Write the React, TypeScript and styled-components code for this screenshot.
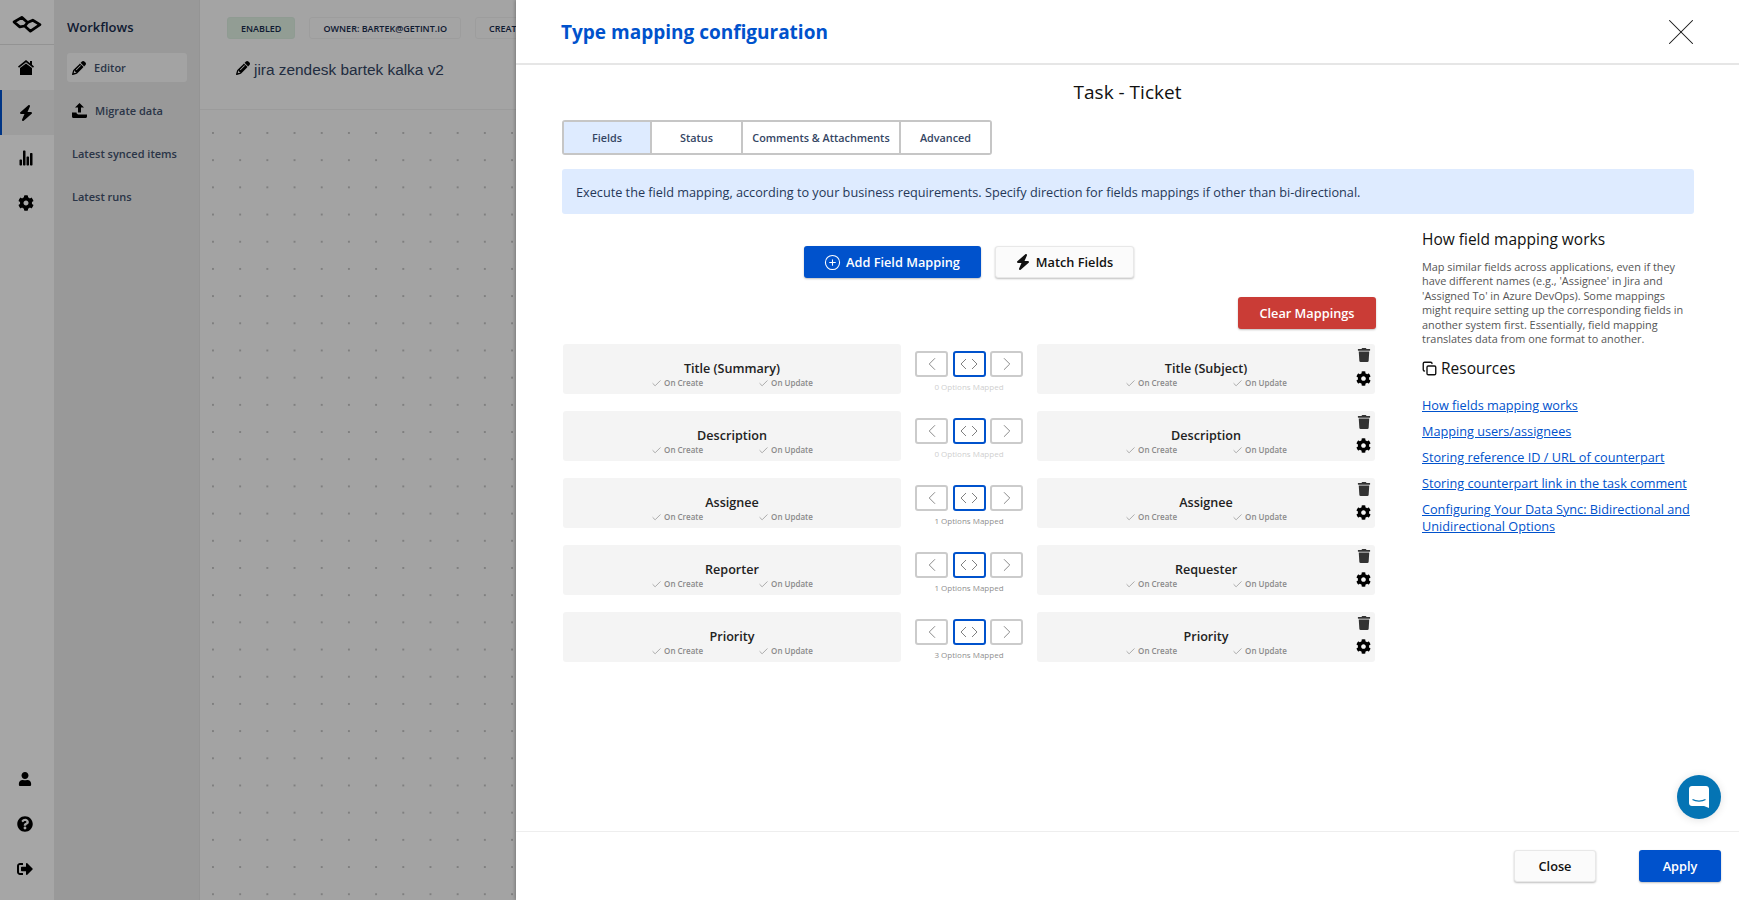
import styled, { createGlobalStyle } from "styled-components";
import { FaCog, FaTrash, FaUser, FaQuestionCircle, FaSignOutAlt } from "react-icons/fa";
import { FaBolt, FaPencil } from "react-icons/fa6";
import { IoStatsChart } from "react-icons/io5";
import { Check, ChevronLeft, ChevronRight, CirclePlus, Copy, X } from "lucide-react";

const GlobalStyle = createGlobalStyle`
  * { box-sizing: border-box; }
  html, body { margin: 0; padding: 0; height: 100%; overflow: hidden; }
  body { font-family: "Open Sans", "Noto Sans", sans-serif; background: #fff; color: #172b4d; }
`;

const Page = styled.div`
  position: relative;
  display: flex;
  width: 100%;
  height: 100vh;
  overflow: hidden;
`;

/* ---- background app, dimmed by the overlay ---- */
const Rail = styled.nav`
  width: 54px;
  flex: none;
  display: flex;
  flex-direction: column;
  background: #fff;
`;

const LogoCell = styled.div`
  height: 45px;
  display: flex;
  align-items: center;
  justify-content: center;
  padding: 3px 0 0 0;
  border-bottom: 1px solid #e2e2e2;
`;

const RailItem = styled.div<{ $active?: boolean }>`
  height: 45px;
  display: flex;
  align-items: center;
  justify-content: center;
  font-size: 16px;
  color: #000;
  background: ${({ $active }) => ($active ? "#f1f1f1" : "transparent")};
  border-left: 2px solid ${({ $active }) => ($active ? "#0052cc" : "transparent")};
  padding-right: 4px;
`;

const RailBottom = styled.div`
  margin-top: auto;
  display: flex;
  flex-direction: column;
  padding: 0 3px 9px 0;
`;

const SubNav = styled.div`
  width: 146px;
  flex: none;
  background: #ebebeb;
  padding: 16px 12px 0 13px;
  border-right: 1px solid #e4e4e4;
`;

const SubTitle = styled.div`
  font-size: 13px;
  font-weight: 600;
  line-height: 22px;
  color: #172b4d;
  margin-bottom: 15px;
`;

const SubItem = styled.div<{ $active?: boolean }>`
  height: 29px;
  margin-bottom: 14px;
  display: flex;
  align-items: center;
  gap: 8px;
  padding-left: 5px;
  border-radius: 3px;
  font-size: 11px;
  font-weight: 600;
  color: #42526e;
  background: ${({ $active }) => ($active ? "#fafafa" : "transparent")};

  svg { color: #000; flex: none; }
`;

const Main = styled.main`
  flex: 1;
  display: flex;
  flex-direction: column;
  background: #fbfbfb;
`;

const TopBar = styled.div`
  height: 110px;
  flex: none;
  padding: 17px 0 0 27px;
  border-bottom: 1px solid #eee;
  background: #fcfcfc;
`;

const Badges = styled.div`
  display: flex;
  gap: 14px;
`;

const Badge = styled.span<{ $green?: boolean }>`
  height: 22px;
  padding: 0 13px;
  display: flex;
  align-items: center;
  border-radius: 3px;
  font-size: 9px;
  font-weight: 600;
  white-space: nowrap;
  color: #172b4d;
  border: 1px solid ${({ $green }) => ($green ? "#dcefe1" : "#f2f2f2")};
  background: ${({ $green }) => ($green ? "#e0f1e4" : "#fcfcfc")};
`;

const FlowName = styled.div`
  margin: 21px 0 0 9px;
  display: flex;
  align-items: center;
  gap: 4px;
  font-family: "Liberation Sans", Arial, sans-serif;
  font-size: 15.4px;
  line-height: 20px;
  color: #344563;

  svg { color: #000; margin-top: -4px; }
`;

const Canvas = styled.div`
  flex: 1;
  background-image: radial-gradient(circle at 1px 1px, #c4c4c4 1px, transparent 1.2px);
  background-size: 27.2px 27.2px;
  background-position: 12px 22px;
`;

const Overlay = styled.div`
  position: absolute;
  inset: 0;
  background: rgba(0, 0, 0, 0.35);
`;

/* ---- modal ---- */
const Modal = styled.section`
  position: absolute;
  top: 0;
  right: 0;
  bottom: 0;
  width: 1223px;
  display: flex;
  flex-direction: column;
  background: #fff;
  box-shadow: -1px 0 3px rgba(0, 0, 0, 0.25);
`;

const ModalHeader = styled.header`
  height: 65px;
  flex: none;
  display: flex;
  align-items: center;
  justify-content: space-between;
  padding: 0 45px;
  border-bottom: 2px solid #e6e6e6;
`;

const ModalTitle = styled.h1`
  margin: 0;
  font-size: 19px;
  font-weight: 700;
  color: #0052cc;
`;

const CloseIcon = styled(X)`
  margin-right: -10px;
  color: #111;
`;

const ModalBody = styled.div`
  flex: 1;
  padding: 13px 45px 0;
`;

const TypeName = styled.div`
  text-align: center;
  font-size: 19px;
  line-height: 28px;
  color: #111;
`;

const Tabs = styled.div`
  display: inline-flex;
  margin: 14px 0 0 1px;
  height: 35px;
  border: 2px solid #c6c6c6;
  border-radius: 3px;
`;

const Tab = styled.div<{ $active?: boolean; $width: number }>`
  width: ${({ $width }) => $width}px;
  display: flex;
  align-items: center;
  justify-content: center;
  font-size: 10.8px;
  font-weight: 600;
  color: #344563;
  background: ${({ $active }) => ($active ? "#deebff" : "#fff")};
  & + & { border-left: 2px solid #c6c6c6; }
`;

const Notice = styled.div`
  height: 45px;
  margin: 14px 0 0 1px;
  padding: 0 14px;
  display: flex;
  align-items: center;
  border-radius: 3px;
  background: #deebff;
  font-size: 12.7px;
  color: #253858;
`;

const Columns = styled.div`
  display: flex;
  justify-content: space-between;
`;

const MappingColumn = styled.div`
  width: 815px;
  padding-left: 2px;
`;

const ActionRow = styled.div`
  display: flex;
  justify-content: center;
  gap: 14px;
  margin-top: 32px;
  padding-right: 2px;
`;

const Button = styled.button<{ $variant?: "primary" | "danger" | "plain"; $width: number }>`
  width: ${({ $width }) => $width}px;
  height: 32px;
  display: inline-flex;
  align-items: center;
  justify-content: center;
  gap: 5px;
  border-radius: 3px;
  font-family: inherit;
  font-size: 12.75px;
  font-weight: 600;
  border: ${({ $variant }) => ($variant === "plain" || !$variant ? "1px solid #e8e8e8" : "none")};
  color: ${({ $variant }) => ($variant === "plain" || !$variant ? "#111" : "#fff")};
  background: ${({ $variant }) =>
    $variant === "primary" ? "#0052cc" : $variant === "danger" ? "#ca3c36" : "#fbfbfb"};
  box-shadow: 0 1px 2px rgba(0, 0, 0, 0.25);
`;

const ClearRow = styled.div`
  display: flex;
  justify-content: flex-end;
  margin: 19px 0 15px;
`;

const Rows = styled.div`
  display: flex;
  flex-direction: column;
  gap: 17px;
`;

const Row = styled.div`
  display: flex;
  gap: 14px;
`;

const FieldBox = styled.div`
  position: relative;
  width: 338px;
  height: 50px;
  padding-top: 16px;
  border-radius: 3px;
  background: #f4f4f4;
  text-align: center;
`;

const FieldName = styled.div`
  font-size: 12.6px;
  font-weight: 600;
  line-height: 18px;
  color: #222;
`;

const SyncRow = styled.div`
  display: flex;
  justify-content: center;
  gap: 55px;
  margin-top: -1px;
`;

const SyncFlag = styled.span`
  display: inline-flex;
  align-items: center;
  gap: 2px;
  font-size: 8px;
  font-weight: 600;
  line-height: 12px;
  color: #8a8a8a;
  svg { color: #a4a4a4; }
`;

const RowTools = styled.div`
  position: absolute;
  top: 4px;
  right: 4px;
  display: flex;
  flex-direction: column;
  align-items: center;
  gap: 9px;
  color: #333;
`;

const Direction = styled.div`
  width: 108px;
  padding-top: 7px;
`;

const DirectionButtons = styled.div`
  display: flex;
  justify-content: space-between;
`;

const DirectionButton = styled.div<{ $active?: boolean }>`
  width: 33px;
  height: 26px;
  display: flex;
  align-items: center;
  justify-content: center;
  border-radius: 3px;
  color: #808080;
  border: 2px solid ${({ $active }) => ($active ? "#0052cc" : "#cbcbcb")};
`;

const MappedCount = styled.div<{ $muted: boolean }>`
  margin-top: 4px;
  text-align: center;
  font-size: 8px;
  line-height: 12px;
  color: ${({ $muted }) => ($muted ? "#cfcfcf" : "#8f8f8f")};
`;

const HelpColumn = styled.aside`
  width: 272px;
  padding-top: 14px;
`;

const HelpTitle = styled.h3`
  margin: 0;
  display: flex;
  align-items: center;
  gap: 4px;
  font-size: 15.5px;
  font-weight: 400;
  line-height: 22px;
  color: #111;
`;

const HelpText = styled.p`
  margin: 10px 0 11px;
  font-size: 10.9px;
  line-height: 14.4px;
  color: #555;
`;

const LinkList = styled.div`
  margin-top: 17.5px;
  display: flex;
  flex-direction: column;
  gap: 9px;
`;

const HelpLink = styled.a`
  font-size: 12.7px;
  line-height: 17px;
  color: #0052cc;
  text-decoration: underline;
`;

const ModalFooter = styled.footer`
  height: 69px;
  flex: none;
  display: flex;
  justify-content: flex-end;
  gap: 43px;
  padding: 18px 18px 0 0;
  border-top: 1px solid #eee;
`;

const ChatBubble = styled.div`
  position: absolute;
  right: 18px;
  bottom: 81px;
  width: 44px;
  height: 44px;
  display: flex;
  align-items: center;
  justify-content: center;
  border-radius: 50%;
  background: #0474b4;
  box-shadow: 0 1px 8px rgba(0, 0, 0, 0.12);
`;

const Logo = () => (
  <svg width="30" height="18" viewBox="8 14 104 62" fill="none" stroke="#000" strokeWidth="9.5" strokeLinejoin="round">
    <path d="M15 38 L42 22 L62 40 L80 32 L105 47 L72 70 L52 52 L35 55 Z" />
    <path d="M52 52 L62 40" />
  </svg>
);

const HomeIcon = () => (
  <svg width="16" height="15" viewBox="0 0 16 15" fill="#000">
    <path d="M8 0 L12 3.2 V1 H14 V4.8 L16 6.5 L15 7.7 L8 2.2 L1 7.7 L0 6.5 Z" />
    <path d="M8 3.4 L14 8 V15 H2 V8 Z" />
  </svg>
);

const UploadIcon = () => (
  <svg width="15" height="15" viewBox="0 0 15 15" fill="#000">
    <path d="M7.5 0 L12 4.6 H9 V9.5 H6 V4.6 H3 Z" />
    <path d="M0 9.5 H4.5 C4.5 11 5.5 11.5 7.5 11.5 H15 V13.5 C15 14.4 14.4 15 13.5 15 H1.5 C.6 15 0 14.4 0 13.5 Z" />
  </svg>
);

const ChatIcon = () => (
  <svg width="20" height="22" viewBox="0 0 20 22">
    <path d="M3 0 H17 C18.7 0 20 1.3 20 3 V22 L15 20 H3 C1.3 20 0 18.7 0 17 V3 C0 1.3 1.3 0 3 0 Z" fill="#fff" />
    <path d="M3.5 13.5 C7 15.6 13 15.6 16.5 13.5" fill="none" stroke="#0474b4" strokeWidth="1.2" />
  </svg>
);

const BothWays = () => (
  <svg width="18" height="12" viewBox="0 0 18 12" fill="none" stroke="currentColor" strokeWidth="1">
    <path d="M6 1 L1 6 L6 11" />
    <path d="M12 1 L17 6 L12 11" />
  </svg>
);

const mappings = [
  { left: "Title (Summary)", right: "Title (Subject)", options: 0 },
  { left: "Description", right: "Description", options: 0 },
  { left: "Assignee", right: "Assignee", options: 1 },
  { left: "Reporter", right: "Requester", options: 1 },
  { left: "Priority", right: "Priority", options: 3 },
];

const resources = [
  "How fields mapping works",
  "Mapping users/assignees",
  "Storing reference ID / URL of counterpart",
  "Storing counterpart link in the task comment",
  "Configuring Your Data Sync: Bidirectional and Unidirectional Options",
];

const tabs = [
  { label: "Fields", width: 86 },
  { label: "Status", width: 91 },
  { label: "Comments & Attachments", width: 158 },
  { label: "Advanced", width: 91 },
];

const SyncFlags = () => (
  <SyncRow>
    <SyncFlag>
      <Check size={11} strokeWidth={2} />
      On Create
    </SyncFlag>
    <SyncFlag>
      <Check size={11} strokeWidth={2} />
      On Update
    </SyncFlag>
  </SyncRow>
);

export default function App() {
  return (
    <Page>
      <GlobalStyle />
      <Rail>
        <LogoCell>
          <Logo />
        </LogoCell>
        <RailItem><HomeIcon /></RailItem>
        <RailItem $active><FaBolt /></RailItem>
        <RailItem><IoStatsChart /></RailItem>
        <RailItem><FaCog /></RailItem>
        <RailBottom>
          <RailItem><FaUser size={14} /></RailItem>
          <RailItem><FaQuestionCircle /></RailItem>
          <RailItem><FaSignOutAlt /></RailItem>
        </RailBottom>
      </Rail>
      <SubNav>
        <SubTitle>Workflows</SubTitle>
        <SubItem $active>
          <FaPencil size={14} />
          Editor
        </SubItem>
        <SubItem>
          <UploadIcon />
          Migrate data
        </SubItem>
        <SubItem>Latest synced items</SubItem>
        <SubItem>Latest runs</SubItem>
      </SubNav>
      <Main>
        <TopBar>
          <Badges>
            <Badge $green>ENABLED</Badge>
            <Badge>OWNER: BARTEK@GETINT.IO</Badge>
            <Badge>CREATED</Badge>
          </Badges>
          <FlowName>
            <FaPencil size={14} />
            jira zendesk bartek kalka v2
          </FlowName>
        </TopBar>
        <Canvas />
      </Main>
      <Overlay />
      <Modal>
        <ModalHeader>
          <ModalTitle>Type mapping configuration</ModalTitle>
          <CloseIcon size={46} strokeWidth={0.55} />
        </ModalHeader>
        <ModalBody>
          <TypeName>Task - Ticket</TypeName>
          <Tabs>
            {tabs.map((t, i) => (
              <Tab key={t.label} $active={i === 0} $width={t.width}>
                {t.label}
              </Tab>
            ))}
          </Tabs>
          <Notice>
            Execute the field mapping, according to your business requirements. Specify direction for fields mappings if other than bi-directional.
          </Notice>
          <Columns>
            <MappingColumn>
              <ActionRow>
                <Button $variant="primary" $width={177}>
                  <CirclePlus size={17} strokeWidth={1.5} />
                  Add Field Mapping
                </Button>
                <Button $width={139}>
                  <FaBolt size={16} />
                  Match Fields
                </Button>
              </ActionRow>
              <ClearRow>
                <Button $variant="danger" $width={138}>Clear Mappings</Button>
              </ClearRow>
              <Rows>
                {mappings.map((m) => (
                  <Row key={m.left}>
                    <FieldBox>
                      <FieldName>{m.left}</FieldName>
                      <SyncFlags />
                    </FieldBox>
                    <Direction>
                      <DirectionButtons>
                        <DirectionButton><ChevronLeft size={22} strokeWidth={1} /></DirectionButton>
                        <DirectionButton $active><BothWays /></DirectionButton>
                        <DirectionButton><ChevronRight size={22} strokeWidth={1} /></DirectionButton>
                      </DirectionButtons>
                      <MappedCount $muted={m.options === 0}>{m.options} Options Mapped</MappedCount>
                    </Direction>
                    <FieldBox>
                      <FieldName>{m.right}</FieldName>
                      <SyncFlags />
                      <RowTools>
                        <FaTrash size={14} />
                        <FaCog size={15} color="#000" />
                      </RowTools>
                    </FieldBox>
                  </Row>
                ))}
              </Rows>
            </MappingColumn>
            <HelpColumn>
              <HelpTitle>How field mapping works</HelpTitle>
              <HelpText>
                Map similar fields across applications, even if they have different names (e.g., 'Assignee' in Jira and 'Assigned To' in Azure DevOps). Some mappings might require setting up the corresponding fields in another system first. Essentially, field mapping translates data from one format to another.
              </HelpText>
              <HelpTitle>
                <Copy size={15} strokeWidth={2.2} color="#111" />
                Resources
              </HelpTitle>
              <LinkList>
                {resources.map((r) => (
                  <HelpLink key={r} href="#">{r}</HelpLink>
                ))}
              </LinkList>
            </HelpColumn>
          </Columns>
        </ModalBody>
        <ModalFooter>
          <Button $width={82}>Close</Button>
          <Button $variant="primary" $width={82}>Apply</Button>
        </ModalFooter>
      </Modal>
      <ChatBubble>
        <ChatIcon />
      </ChatBubble>
    </Page>
  );
}
